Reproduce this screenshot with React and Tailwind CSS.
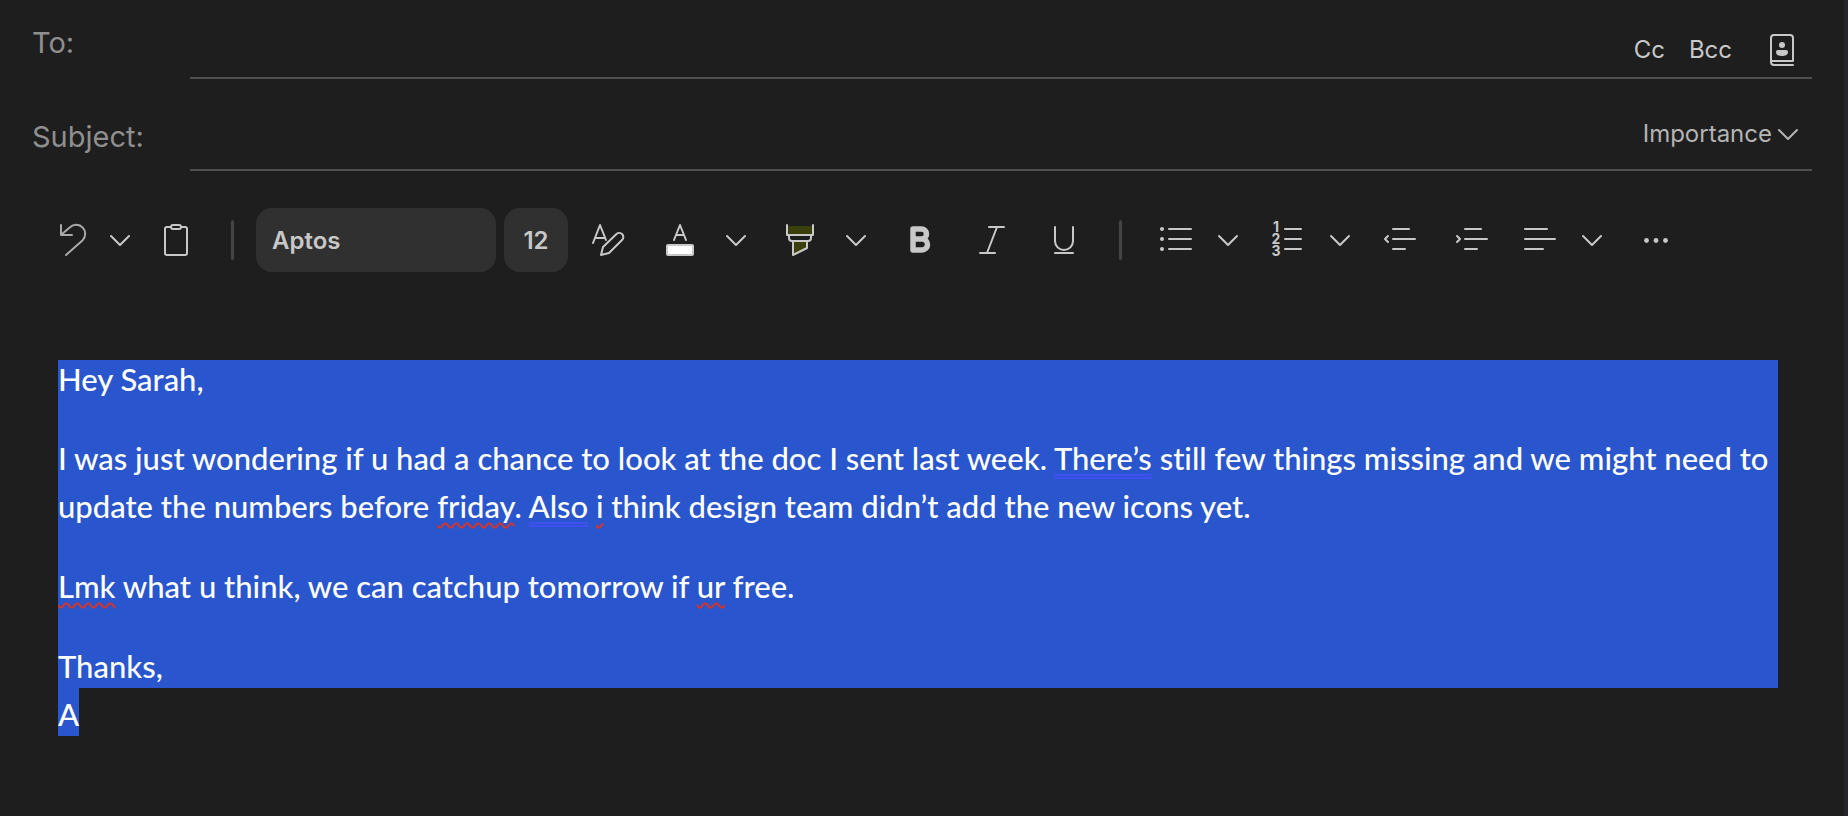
import React, { useState } from "react";

const Icon = ({ children }) => (
    <svg
        className="block h-8 w-8 overflow-visible"
        viewBox="0 0 32 32"
        fill="none"
        stroke="currentColor"
        strokeWidth="2"
        strokeLinecap="round"
        strokeLinejoin="round"
        aria-hidden="true"
    >
        {children}
    </svg>
);

const ToolButton = ({ label, className, children }) => (
    <button type="button" aria-label={label} className={`shrink-0 ${className}`}>
        <Icon>{children}</Icon>
    </button>
);

const MenuButton = ({ label, className }) => (
    <ToolButton label={label} className={className}>
        <path d="M7 12l9 9 9-9" />
    </ToolButton>
);

const Separator = ({ className }) => (
    <div className={`h-10 w-[3px] shrink-0 rounded-sm bg-[#444444] ${className}`} />
);

const Misspelled = ({ children }) => (
    <span className="underline decoration-[#dc3223] decoration-wavy decoration-2 underline-offset-4 [text-decoration-skip-ink:none]">
        {children}
    </span>
);

const Grammar = ({ children }) => (
    <span className="underline decoration-[#3f50f0] decoration-double decoration-2 underline-offset-4 [text-decoration-skip-ink:none]">
        {children}
    </span>
);

const Header = () => {
    const [to, setTo] = useState("");
    const [subject, setSubject] = useState("");

    return (
        <div className="pl-8 pr-8 text-[29px] text-[#8f8f8f]">
            <div className="flex h-[79px]">
                <label htmlFor="to" className="w-[158px] shrink-0 pt-[23px] leading-10">
                    To:
                </label>
                <div className="flex flex-1 items-center border-b-2 border-[#4f4f4f] pt-[22px] pr-[14px] text-2xl text-[#c8c8c8]">
                    <input
                        id="to"
                        className="h-10 min-w-0 flex-1 bg-transparent outline-none"
                        value={to}
                        onChange={e => setTo(e.target.value)}
                    />
                    <button type="button">Cc</button>
                    <button type="button" className="ml-6">Bcc</button>
                    <button type="button" aria-label="Address book" className="ml-[34px]">
                        <Icon>
                            <path d="M27 27V4a3 3 0 0 0-3-3H8a3 3 0 0 0-3 3v24a3 3 0 0 0 3 3h19M5 28a1 1 0 0 1 1-1h21" />
                            <circle cx="16" cy="11" r="3" fill="currentColor" stroke="none" />
                            <path d="M12 16h8a2 2 0 0 1 2 2c0 3-3 4-6 4s-6-1-6-4a2 2 0 0 1 2-2z" fill="currentColor" stroke="none" />
                        </Icon>
                    </button>
                </div>
            </div>
            <div className="flex h-[92px]">
                <label htmlFor="subject" className="w-[158px] shrink-0 pt-[38px] leading-10">
                    Subject:
                </label>
                <div className="flex flex-1 items-center border-b-2 border-[#4f4f4f] pt-5 pr-2 text-2xl text-[#b4b4b4]">
                    <input
                        id="subject"
                        className="h-10 min-w-0 flex-1 bg-transparent outline-none"
                        value={subject}
                        onChange={e => setSubject(e.target.value)}
                    />
                    <button type="button" className="flex items-center">
                        Importance
                        <Icon>
                            <path d="M7 12l9 9 9-9" />
                        </Icon>
                    </button>
                </div>
            </div>
        </div>
    );
};

const Toolbar = () => {
    const [font, setFont] = useState("Aptos");
    const [size, setSize] = useState("12");

    return (
        <div className="mt-[37px] flex h-16 items-center pl-14 text-2xl font-semibold text-[#c8c8c8]">
            <ToolButton label="Undo" className="text-[#aaaaaa]">
                <path d="M5 1v10h11M5.500 10.500L14 3.300A9 9 0 0 1 26.400 16.400L10 31" />
            </ToolButton>
            <MenuButton label="Undo options" className="ml-4" />
            <ToolButton label="Paste" className="ml-6">
                <path d="M11 3H7a2 2 0 0 0-2 2v24a2 2 0 0 0 2 2h18a2 2 0 0 0 2-2V5a2 2 0 0 0-2-2h-4" />
                <rect x="11" y="1" width="10" height="4" rx="2" />
            </ToolButton>
            <Separator className="ml-[39px]" />
            <input
                aria-label="Font"
                className="ml-[22px] h-16 w-60 rounded-2xl bg-[#303030] px-4 outline-none"
                value={font}
                onChange={e => setFont(e.target.value)}
            />
            <input
                aria-label="Font size"
                className="ml-2 h-16 w-16 rounded-2xl bg-[#303030] text-center outline-none"
                value={size}
                onChange={e => setSize(e.target.value)}
            />
            <ToolButton label="Format painter" className="ml-6">
                <path d="M1 19L8 1l6 15M3 14h10" />
                <path d="M9 31l2-8L24.500 10a3.900 3.900 0 0 1 5.500 6L17 29z" />
            </ToolButton>
            <ToolButton label="Font color" className="ml-10">
                <path d="M10 16l6-15 6 15M12 11h8" />
                <rect x="3" y="21" width="26" height="10" rx="1" fill="#ffffff" />
            </ToolButton>
            <MenuButton label="Font color options" className="ml-6" />
            <ToolButton label="Highlight" className="ml-8">
                <path d="M3 2h26v9H3zM9 18h14v7l-14 6z" fill="#3a3f0c" stroke="none" />
                <path d="M3 1v10h26V1M5 11v3a3 3 0 0 0 3 3h16a3 3 0 0 0 3-3v-3M9 17v14l14-7v-7" />
            </ToolButton>
            <MenuButton label="Highlight options" className="ml-6" />
            <ToolButton label="Bold" className="ml-8">
                <path d="M9 5h8.500a4.500 4.500 0 0 1 0 10H9zM9 15h9a5.500 5.500 0 0 1 0 11H9z" strokeWidth="5.500" />
            </ToolButton>
            <ToolButton label="Italic" className="ml-10">
                <path d="M13 3h15M4 29h15M21 3L11 29" />
            </ToolButton>
            <ToolButton label="Underline" className="ml-10">
                <path d="M7 3v14a9 9 0 0 0 18 0V3M7 29h18" />
            </ToolButton>
            <Separator className="ml-[39px]" />
            <ToolButton label="Bullets" className="ml-[38px]">
                <g fill="currentColor" stroke="none">
                    <circle cx="2" cy="5" r="2" />
                    <circle cx="2" cy="15" r="2" />
                    <circle cx="2" cy="25" r="2" />
                </g>
                <path d="M9 5h22M9 15h22M9 25h22" />
            </ToolButton>
            <MenuButton label="Bullet options" className="ml-5" />
            <ToolButton label="Numbering" className="ml-7">
                <g fill="currentColor" stroke="none" fontSize="14" fontWeight="700" textAnchor="middle">
                    <text x="4" y="8">1</text>
                    <text x="4" y="20">2</text>
                    <text x="4" y="32">3</text>
                </g>
                <path d="M13 5h16M13 15h16M13 25h16" />
            </ToolButton>
            <MenuButton label="Numbering options" className="ml-5" />
            <ToolButton label="Decrease indent" className="ml-7">
                <path d="M4 12l-3 3 3 3M9 5h16M9 15h22M9 25h12" />
            </ToolButton>
            <ToolButton label="Increase indent" className="ml-10">
                <path d="M1 12l3 3-3 3M9 5h16M9 15h22M9 25h12" />
            </ToolButton>
            <ToolButton label="Align left" className="ml-9">
                <path d="M1 5h22M1 15h30M1 25h18" />
            </ToolButton>
            <MenuButton label="Alignment options" className="ml-5" />
            <ToolButton label="More" className="ml-8">
                <g fill="currentColor" stroke="none">
                    <circle cx="6.500" cy="16.500" r="2.400" />
                    <circle cx="16" cy="16.500" r="2.400" />
                    <circle cx="25.500" cy="16.500" r="2.400" />
                </g>
            </ToolButton>
        </div>
    );
};

const Message = () => (
    <div
        role="textbox"
        aria-label="Message body"
        className="mt-[88px] pl-[58px] pr-[66px] font-['Lato',sans-serif] text-[31px] font-medium leading-10 text-white [font-variant-ligatures:none]"
    >
        <div className="bg-[#2955cd] pb-[2px]">
            <p className="leading-[38px]">Hey Sarah,</p>
            <p className="mt-9 leading-12">
                I was just wondering if u had a chance to look at the doc I sent last week.{" "}
                <Grammar>There’s</Grammar> still few things missing and we might need to update the
                numbers before <Misspelled>friday</Misspelled>. <Grammar>Also</Grammar>{" "}
                <Misspelled>i</Misspelled> think design team didn’t add the new icons yet.
            </p>
            <p className="mt-9">
                <Misspelled>Lmk</Misspelled> what u think, we can catchup tomorrow if{" "}
                <Misspelled>ur</Misspelled> free.
            </p>
            <p className="mt-10">Thanks,</p>
        </div>
        <p className="w-fit bg-[#2955cd] pt-[6px] pb-[2px]">A</p>
    </div>
);

const App = () => (
    <div className="min-h-screen border-r-4 border-[#25262a] bg-[#1e1e1e] font-['Inter',sans-serif]">
        <Header />
        <Toolbar />
        <Message />
    </div>
);

export default App;
